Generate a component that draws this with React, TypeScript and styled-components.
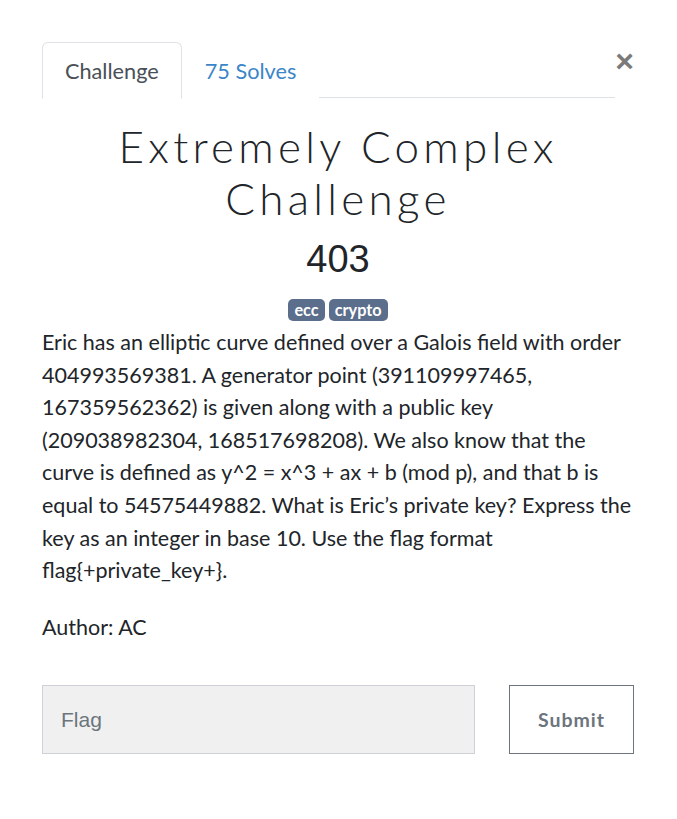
import React from "react";
import styled, { createGlobalStyle } from "styled-components";

const Global = createGlobalStyle`
  html, body { margin: 0; padding: 0; background: #fff; }
  body { font-family: "Lato", "Noto Sans", sans-serif; color: #212529; }
  * { box-sizing: border-box; }
`;

const Modal = styled.div`
  width: 677px;
  padding: 42px 43px 40px 42px;
`;

const Header = styled.div`
  display: flex;
  align-items: flex-start;
`;

const Nav = styled.div`
  flex: 0 0 573px;
  display: flex;
  border-bottom: 1px solid #dee2e6;
  height: 56px;
`;

const Tab = styled.div<{ $active?: boolean }>`
  display: flex;
  align-items: center;
  padding: 0 22px;
  font-size: 21.7px;
  color: ${(p) => (p.$active ? "#495057" : "#3a86c8")};
  background: #fff;
  border: 1px solid ${(p) => (p.$active ? "#dee2e6" : "transparent")};
  border-bottom-color: ${(p) => (p.$active ? "#fff" : "transparent")};
  border-radius: 6px 6px 0 0;
  margin-bottom: -1px;
  height: 57px;
`;

const Close = styled.div`
  margin-left: auto;
  margin-top: 3px;
  font-family: "Liberation Sans", Arial, sans-serif;
  font-size: 32px;
  font-weight: 700;
  line-height: 1;
  color: #7a7a7a;
`;

const Title = styled.h2`
  margin: 22px 0 0;
  text-align: center;
  font-family: "Lato", sans-serif;
  font-weight: 300;
  font-size: 44px;
  line-height: 52px;
  letter-spacing: 4.3px;
  color: #212529;
`;

const Value = styled.h3`
  margin: 13px 0 0;
  text-align: center;
  font-family: "Liberation Sans", Arial, sans-serif;
  font-weight: 400;
  font-size: 38px;
  line-height: 44px;
  color: #212529;
`;

const Tags = styled.div`
  display: flex;
  justify-content: center;
  gap: 4px;
  margin-top: 18px;
`;

const Tag = styled.span`
  display: inline-block;
  background: #5b6e8b;
  color: #fff;
  font-weight: 700;
  font-size: 16.3px;
  line-height: 22px;
  padding: 0 6px;
  border-radius: 5px;
`;

const Description = styled.div`
  margin-top: 5px;
  font-size: 21.5px;
  line-height: 32.6px;
  color: #212529;
  p { margin: 0 0 24px; }
`;

const Form = styled.div`
  display: flex;
  gap: 34px;
  margin-top: 42px;
`;

const FlagInput = styled.input`
  width: 433px;
  height: 69px;
  background: #f0f0f0;
  border: 1px solid #cfd1d8;
  padding: 0 18px;
  font-family: "Liberation Sans", Arial, sans-serif;
  font-size: 21px;
  color: #495057;
  outline: none;
  &::placeholder { color: #6c757d; }
`;

const SubmitButton = styled.button`
  width: 125px;
  height: 69px;
  background: #fff;
  border: 1px solid #6c757d;
  font-family: "Lato", sans-serif;
  font-weight: 700;
  font-size: 19.5px;
  letter-spacing: 1px;
  color: #6c757d;
`;

export default function App() {
  return (
    <>
      <Global />
      <Modal>
        <Header>
          <Nav>
            <Tab $active>Challenge</Tab>
            <Tab>75 Solves</Tab>
          </Nav>
          <Close>×</Close>
        </Header>
        <Title>Extremely Complex Challenge</Title>
        <Value>403</Value>
        <Tags>
          <Tag>ecc</Tag>
          <Tag>crypto</Tag>
        </Tags>
        <Description>
          <p>
            Eric has an elliptic curve defined over a Galois field with order
            404993569381. A generator point (391109997465, 167359562362) is
            given along with a public key (209038982304, 168517698208). We also
            know that the curve is defined as y^2 = x^3 + ax + b (mod p), and
            that b is equal to 54575449882. What is Eric’s private key? Express
            the key as an integer in base 10. Use the flag format
            flag&#123;+private_key+&#125;.
          </p>
          <p>Author: AC</p>
        </Description>
        <Form>
          <FlagInput placeholder="Flag" />
          <SubmitButton>Submit</SubmitButton>
        </Form>
      </Modal>
    </>
  );
}
